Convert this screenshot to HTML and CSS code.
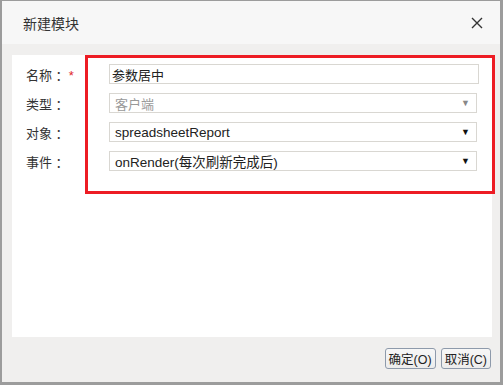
FILE: index.html
```html
<!doctype html>
<html>
  <head>
    <title>新建模块</title>
    <meta charset="utf-8">
    <link rel="stylesheet" href="styles.css">
  </head>

  <body>
    <div class="dialog">
      <div class="dialog-head">
        <span class="dialog-title">新建模块</span>
        <svg class="close" width="12" height="12" viewBox="0 0 12 12">
          <path d="M1 1 L11 11 M11 1 L1 11" stroke="#333" stroke-width="1.4" fill="none"/>
        </svg>
      </div>
      <div class="dialog-body">
        <div class="panel">
          <div class="row">
            <label class="lbl">名称 ：<span class="req">*</span></label>
            <div class="field text">参数居中</div>
          </div>
          <div class="row">
            <label class="lbl">类型 ：</label>
            <div class="field select disabled"><span>客户端</span><i class="arrow">▼</i></div>
          </div>
          <div class="row">
            <label class="lbl">对象 ：</label>
            <div class="field select"><span>spreadsheetReport</span><i class="arrow">▼</i></div>
          </div>
          <div class="row">
            <label class="lbl">事件 ：</label>
            <div class="field select"><span>onRender(每次刷新完成后)</span><i class="arrow">▼</i></div>
          </div>
        </div>
      </div>
      <div class="dialog-foot">
        <button class="btn">确定(O)</button>
        <button class="btn">取消(C)</button>
      </div>
    </div>
    <div class="highlight"></div>
  </body>
</html>
```

FILE: styles.css
```css
body {
  margin: 0;
  background: #9c9c9c;
  font-family: "Liberation Sans", "Noto Sans CJK SC", sans-serif;
  font-size: 13px;
  color: #333;
  width: 503px;
  height: 385px;
  overflow: hidden;
}
.dialog {
  margin: 1px 0 0 2px;
  width: 498px;
  height: 381px;
  background: #f0efee;
  display: flex;
  flex-direction: column;
}
.dialog-head {
  height: 43px;
  background: #f7f7f7;
  display: flex;
  align-items: center;
  justify-content: space-between;
  padding: 0 17px 0 21px;
}
.dialog-title {
  font-size: 14px;
  color: #333;
}
.close {
  margin-top: 1px;
}
.dialog-body {
  padding: 11px 8px 0 10px;
}
.panel {
  background: #fff;
  height: 273px;
  padding: 9px 0 0 14px;
  display: flex;
  flex-direction: column;
  gap: 9px;
}
.row {
  display: flex;
  align-items: center;
  height: 20px;
}
.lbl {
  width: 83px;
  color: #333;
  font-size: 13px;
  white-space: pre;
}
.req {
  color: #e0262b;
}
.field {
  box-sizing: border-box;
  height: 20px;
  border: 1px solid #d9d7d2;
  background: #fff;
  display: flex;
  align-items: center;
  color: #222;
}
.text {
  width: 370px;
  padding-left: 2px;
  font-size: 13px;
}
.select {
  width: 368px;
  padding: 0 6px 0 5px;
  justify-content: space-between;
  font-size: 13.5px;
}
.arrow {
  font-style: normal;
  font-size: 9px;
  color: #111;
}
.disabled span {
  color: #999;
  font-size: 13px;
}
.disabled .arrow {
  color: #888;
}
.dialog-foot {
  display: flex;
  justify-content: flex-end;
  gap: 5px;
  padding: 11px 9px 0 0;
}
.btn {
  height: 21px;
  padding: 0 3px;
  border: 1px solid #8e9aab;
  border-radius: 3px;
  background: linear-gradient(#f7f7f7, #ececec);
  font-family: "Liberation Sans", "Noto Sans CJK SC", sans-serif;
  font-size: 12.5px;
  color: #222;
}
.highlight {
  position: absolute;
  left: 85px;
  top: 55px;
  width: 404px;
  height: 133px;
  border: 3px solid #ed1c24;
}
```
